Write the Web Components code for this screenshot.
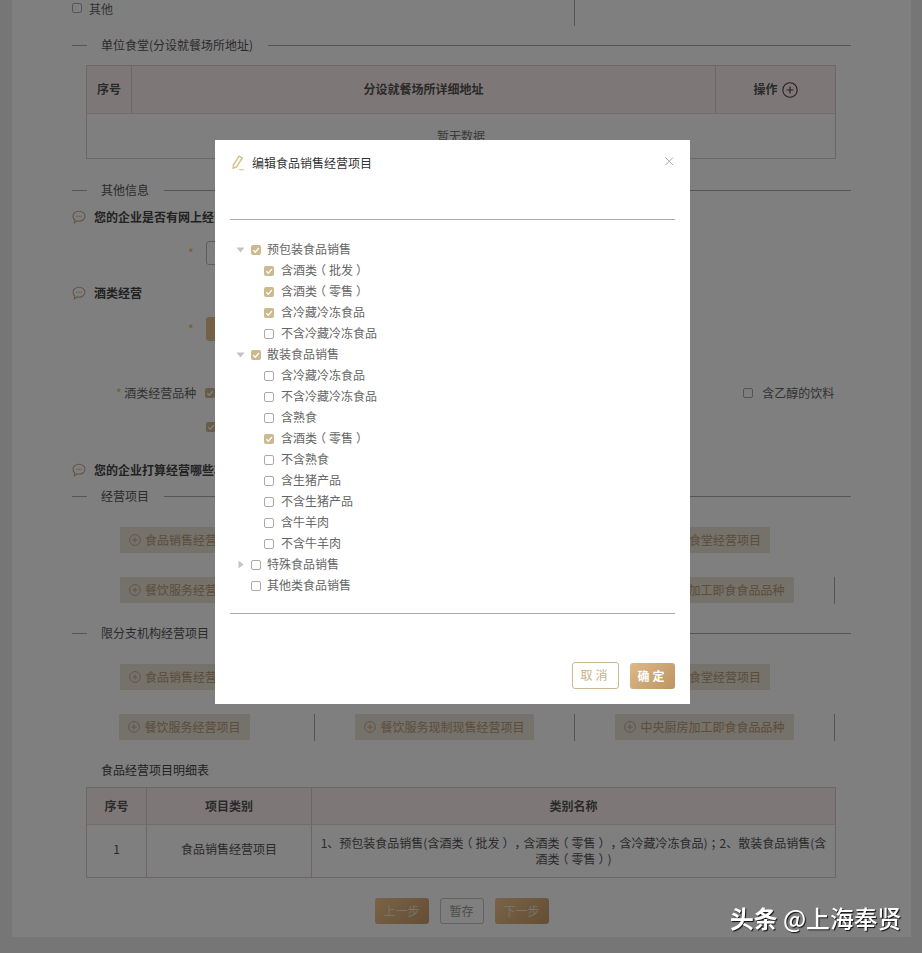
<!DOCTYPE html>
<html lang="zh"><head><meta charset="utf-8"><title>编辑食品销售经营项目</title>
<style>
html,body{margin:0;padding:0;width:922px;height:953px;overflow:hidden;background:#ececec;font:12px/1.4 "Noto Sans CJK SC","Liberation Sans",sans-serif;color:#666;text-spacing-trim:space-all}
</style></head><body>
<page-card></page-card>
<modal-mask></modal-mask>
<edit-dialog></edit-dialog>
<water-mark><b>头条</b> @上海奉贤</water-mark>
<script>
const CK='<svg viewBox="0 0 10 10" width="10" height="10"><path d="M2.3 5.2 4.3 7.2 7.900 3" fill="none" stroke="#fff" stroke-width="1.3"/></svg>';
const PLUS=(s,c)=>`<svg viewBox="0 0 16 16" width="${s}" height="${s}" style="flex:none"><circle cx="8" cy="8" r="7.2" fill="none" stroke="${c}" stroke-width="1.1"/><path d="M4.6 8h6.8M8 4.6v6.8" stroke="${c}" stroke-width="1.1"/></svg>`;
const P=t=>t.replace(/[（），；]/g,m=>`<span style="font-feature-settings:'halt';padding:0 3px">${m}</span>`);
class Base extends HTMLElement{constructor(){super();this.attachShadow({mode:'open'})}connectedCallback(){this.shadowRoot.innerHTML=`<style>${this.css()}</style>${this.html()}`}}
customElements.define('check-box',class extends Base{css(){return `:host{display:inline-flex;flex:none;width:10px;height:10px;box-sizing:border-box;border:1px solid #aaa;border-radius:2px;background:#fff;position:relative}
:host([on]){border:0;background:#cdb98e}svg{display:block}`}html(){return this.hasAttribute('on')?CK:''}});
customElements.define('sec-title',class extends Base{css(){return `:host{display:flex;align-items:center;height:20px;margin-left:60px;width:779px;color:#555}
i{display:block;height:1px;background:#aaa}i.a{width:15px;margin-right:14px}i.b{flex:1;margin-left:15px}`}html(){return `<i class="a"></i><span><slot></slot></span><i class="b"></i>`}});
customElements.define('q-line',class extends Base{css(){return `:host{display:flex;align-items:center;gap:8px;height:20px;margin-left:60px;font-weight:700;color:#444;white-space:nowrap}`}
html(){return `<svg viewBox="0 0 14 14" width="14" height="14"><path d="M7 1.2c3.3 0 6 2.2 6 5s-2.700 5-6 5c-.8 0-1.500-.1-2.200-.4L2.400 12.800l.4-2.900C1.700 9 1 7.700 1 6.200c0-2.800 2.700-5 6-5z" fill="none" stroke="#caa878" stroke-width="1.100"/><path d="M4.500 6.300h1M6.600 6.300h1M8.700 6.300h1" stroke="#999" stroke-width="1"/></svg><span><slot></slot></span>`}});
customElements.define('biz-btn',class extends Base{css(){return `:host{display:inline-flex;align-items:center;justify-content:center;gap:4px;height:26px;padding:0 9px;background:#ebe2d6;color:#b89a74;font-size:12px;white-space:nowrap}`}
html(){return PLUS(12,'#b9a283')+`<span><slot></slot></span>`}});
customElements.define('biz-grid',class extends Base{css(){return `:host{display:grid;grid-template-columns:repeat(3,260px);grid-auto-rows:50px;margin-left:43px;width:780px}`}html(){return `<slot></slot>`}});
customElements.define('biz-cell',class extends Base{css(){return `:host{display:flex;align-items:flex-start;justify-content:center;box-sizing:border-box;height:27px;position:relative}
:host([sep]){border-right:1px solid #aaa}`}html(){return `<slot></slot>`}});
customElements.define('data-table',class extends Base{css(){return `:host{display:grid;margin-left:74px;width:750px;box-sizing:border-box;border:1px solid #d8cfc8}
.h{background:#fdefee;font-weight:700;color:#555;display:flex;align-items:center;justify-content:center;gap:4px;border-bottom:1px solid #ecd6d6}
.h+.h{border-left:1px solid #d8cfc8}.c{display:flex;align-items:center;justify-content:center;text-align:center;color:#555;line-height:16.500px;padding:0 7px}
.c:not(:last-child){padding-bottom:3px}
.c+.c{border-left:1px solid #d8cfc8}`}
html(){return `<style>:host{grid-template-columns:${this.getAttribute('cols')};grid-template-rows:${this.getAttribute('rows')}}</style>`+this.getAttribute('head').split('|').map(t=>`<div class="h">${t.replace('+',PLUS(16,'#444'))}</div>`).join('')+(this.hasAttribute('empty')?`<div class="c" style="grid-column:1/-1;color:#777">${this.getAttribute('empty')}</div>`:this.getAttribute('row').split('|').map(t=>`<div class="c"><span>${P(t)}</span></div>`).join(''))}});
customElements.define('flat-btn',class extends Base{css(){return `:host{display:inline-flex;align-items:center;justify-content:center;box-sizing:border-box;height:26px;border-radius:3px;background:linear-gradient(135deg,#dcb987,#bc9563);color:#fff;white-space:nowrap}
:host([ghost]){background:#fff;border:1px solid #c9b793;color:#c9b185}`}html(){return `<slot></slot>`}});
customElements.define('page-card',class extends Base{css(){return `:host{display:block;box-sizing:border-box;margin-left:12px;width:899px;height:937px;background:#fff;overflow:hidden}
.r{display:flex;align-items:center;gap:7px;margin-left:60px}.first{width:503px;height:26px;box-sizing:border-box;border-right:1px solid #aaa;align-items:flex-start;padding-top:2px;line-height:14px}
.star{color:#efb45a;font-size:12px}
.opt{height:24px;align-items:center}.box{width:60px;height:24px;box-sizing:border-box;border:1px solid #bbb;border-radius:3px}.gold{width:60px;height:24px;border-radius:3px;background:#e8c48c}
.bar{display:flex;justify-content:center;gap:11px;margin-top:20px}
.bar .u{background:linear-gradient(135deg,#f4c68c,#c99c6a);color:#f0e4d4}
.bar .g{background:#fff;border:1px solid #c9c4b8;color:#9a9a92}`}
html(){return `
<div class="r first"><check-box style="margin-top:1px"></check-box><span>其他</span></div>
<sec-title style="margin-top:9px">单位食堂(分设就餐场所地址)</sec-title>
<data-table style="margin-top:10px;height:94px" cols="44px 584px 1fr" rows="48px 1fr" head="序号|分设就餐场所详细地址|操作 +" empty="暂无数据"></data-table>
<sec-title style="margin-top:21px">其他信息</sec-title>
<q-line style="margin-top:7px">您的企业是否有网上经营行为</q-line>
<div class="r opt" style="margin-top:14px;gap:12px;margin-left:176px"><span class="star">*</span><div class="box"></div></div>
<q-line style="margin-top:18px">酒类经营</q-line>
<div class="r opt" style="margin-top:14px;gap:12px;margin-left:176px"><span class="star">*</span><div class="gold"></div></div>
<div style="display:flex;align-items:center;height:20px;margin-top:42px;margin-left:104px">
  <span><span class="star">*</span> 酒类经营品种</span><check-box on style="margin-left:9px"></check-box>
  <check-box style="margin-left:528px"></check-box><span style="margin-left:9px">含乙醇的饮料</span>
</div>
<div style="margin:19px 0 0 194px;height:10px"><check-box on style="display:flex"></check-box></div>
<q-line style="margin-top:28px">您的企业打算经营哪些项目</q-line>
<sec-title style="margin-top:6px">经营项目</sec-title>
<biz-grid style="margin-top:21px"><biz-cell><biz-btn>食品销售经营项目</biz-btn></biz-cell><biz-cell><biz-btn>食品现制现售经营项目</biz-btn></biz-cell><biz-cell><biz-btn>单位食堂经营项目</biz-btn></biz-cell>
<biz-cell><biz-btn>餐饮服务经营项目</biz-btn></biz-cell><biz-cell><biz-btn>餐饮服务现制现售经营项目</biz-btn></biz-cell><biz-cell sep><biz-btn>中央厨房加工即食食品品种</biz-btn></biz-cell></biz-grid>
<sec-title style="margin-top:-4px">限分支机构经营项目</sec-title>
<biz-grid style="margin-top:21px"><biz-cell><biz-btn>食品销售经营项目</biz-btn></biz-cell><biz-cell><biz-btn>食品现制现售经营项目</biz-btn></biz-cell><biz-cell><biz-btn>单位食堂经营项目</biz-btn></biz-cell>
<biz-cell sep><biz-btn>餐饮服务经营项目</biz-btn></biz-cell><biz-cell sep><biz-btn>餐饮服务现制现售经营项目</biz-btn></biz-cell><biz-cell sep><biz-btn>中央厨房加工即食食品品种</biz-btn></biz-cell></biz-grid>
<div style="margin:-4px 0 0 89px;height:20px;line-height:20px;color:#444">食品经营项目明细表</div>
<data-table style="margin-top:7px;height:91px" cols="59px 165px 1fr" rows="37px 1fr" head="序号|项目类别|类别名称" row="1|食品销售经营项目|1、预包装食品销售(含酒类（批发），含酒类（零售），含冷藏冷冻食品)；2、散装食品销售(含<br>酒类（零售）)"></data-table>
<div class="bar"><flat-btn class="u" style="width:54px">上一步</flat-btn><flat-btn class="g" style="width:44px">暂存</flat-btn><flat-btn class="u" style="width:54px">下一步</flat-btn></div>`}});
customElements.define('modal-mask',class extends Base{css(){return `:host{position:fixed;inset:0;background:rgba(0,0,0,.5)}`}html(){return ''}});
customElements.define('tree-node',class extends Base{css(){return `:host{display:flex;align-items:center;height:21px;color:#666;white-space:nowrap}
:host([child]){padding-left:34px;gap:7px}:host(:not([child])){gap:6px}
.car{width:15px;margin-right:-6px;padding-left:6px;display:flex;align-items:center;height:10px;flex:none}
.car svg{display:block}`}
html(){const c=this.hasAttribute('child'),k=this.getAttribute('caret');
 const car=c?'':`<span class="car">${k==='down'?'<svg width="9" height="6" viewBox="0 0 9 6"><path d="M.5 .5h8L4.500 5.500z" fill="#c4c4c4"/></svg>':k==='right'?'<svg width="6" height="9" viewBox="0 0 6 9" style="margin-left:2px"><path d="M.5 .5v8L5.500 4.500z" fill="#c4c4c4"/></svg>':''}</span>`;
 return `${car}<check-box ${this.hasAttribute('on')?'on':''}></check-box><span><slot></slot></span>`}});
customElements.define('edit-dialog',class extends Base{css(){return `:host{position:fixed;left:215px;top:140px;width:475px;height:564px;background:#fff;display:flex;flex-direction:column;box-sizing:border-box;padding:0 15px;z-index:1}
.t{display:flex;align-items:center;gap:7px;height:46px;color:#333;padding-left:1px;position:relative}
.x{position:absolute;right:-1px;top:13px;width:14px;height:16px;display:block}
hr{border:0;height:1px;background:#aaa;margin:0;flex:none}
.tree{margin-top:19px;height:357px;flex:none}
.f{display:flex;justify-content:flex-end;gap:11px;margin-top:48px}`}
html(){const T=[['预包装食品销售',0,1,'down'],['含酒类（批发）',1,1],['含酒类（零售）',1,1],['含冷藏冷冻食品',1,1],['不含冷藏冷冻食品',1,0],['散装食品销售',0,1,'down'],['含冷藏冷冻食品',1,0],['不含冷藏冷冻食品',1,0],['含熟食',1,0],['含酒类（零售）',1,1],['不含熟食',1,0],['含生猪产品',1,0],['不含生猪产品',1,0],['含牛羊肉',1,0],['不含牛羊肉',1,0],['特殊食品销售',0,0,'right'],['其他类食品销售',0,0]];
 return `<div class="t"><svg width="14" height="16" viewBox="0 0 14 16"><path d="M8 1.200 11.200 3 5.600 12 2.200 13.200 2.500 9.800z" fill="none" stroke="#d8c088" stroke-width="1.500"/><path d="M8 14.700h5" stroke="#d8c088" stroke-width="1"/></svg><span>编辑食品销售经营项目</span>
 <svg class="x" viewBox="0 0 14 16"><path d="M3.500 4.500 11 12M11 4.500 3.500 12" stroke="#aaa" stroke-width="1"/></svg></div>
 <div style="height:33px;flex:none"></div><hr>
 <div class="tree">${T.map(([l,c,o,k])=>`<tree-node ${c?'child':''} ${o?'on':''} ${k?`caret="${k}"`:''}>${P(l)}</tree-node>`).join('')}</div>
 <div style="height:17px;flex:none"></div><hr>
 <div class="f"><flat-btn ghost style="width:47px;height:27px;letter-spacing:3px">取消</flat-btn><flat-btn style="width:45px;letter-spacing:3px;font-weight:700;margin-top:1px">确定</flat-btn></div>`}});
customElements.define('water-mark',class extends Base{css(){return `:host{position:fixed;left:730px;top:902px;font-size:23.800px;line-height:32px;font-weight:500;color:#fff;white-space:nowrap;text-shadow:1px 1px 1px #111;z-index:2}`}html(){return `<slot></slot>`}});
</script>
</body></html>
